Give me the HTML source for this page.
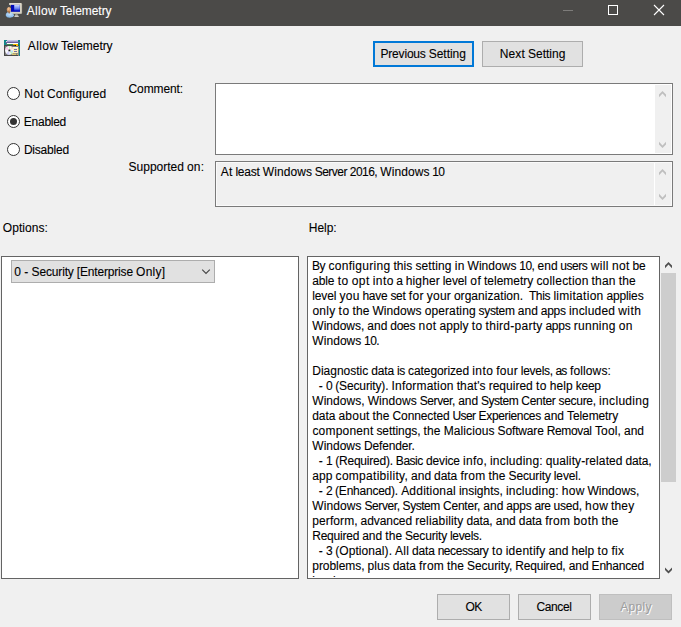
<!DOCTYPE html>
<html>
<head>
<meta charset="utf-8">
<title>Allow Telemetry</title>
<style>
html,body{margin:0;padding:0;}
body{width:681px;height:627px;overflow:hidden;background:#f0f0f0;position:relative;font-family:"Liberation Sans",sans-serif;font-size:12px;line-height:14px;color:#000;}
.abs{position:absolute;box-sizing:border-box;}
.t{-webkit-text-stroke:0.1px currentColor;position:absolute;white-space:pre;font-family:"Liberation Sans",sans-serif;font-size:12px;line-height:14px;}
.titlebar{left:0;top:0;width:681px;height:26px;background:#4b4a48;}
.btn{background:#e1e1e1;border:1px solid #adadad;}
.radio{width:13px;height:13px;border-radius:50%;border:1px solid #333;background:#fff;}
.radio.on::after{content:"";position:absolute;left:2px;top:2px;width:7px;height:7px;border-radius:50%;background:#333;}
.panel{background:#fff;border:1px solid #646464;}
</style>
</head>
<body>
<!-- title bar -->
<div class="abs titlebar"></div>
<svg class="abs" style="left:0;top:0" width="681" height="26" viewBox="0 0 681 26">
  <!-- window buttons -->
  <rect x="563" y="10" width="10" height="1" fill="#7d7c7a"/>
  <rect x="608.5" y="5.5" width="9" height="9" fill="none" stroke="#fff" stroke-width="1"/>
  <path d="M654 5 L664 15 M664 5 L654 15" stroke="#fff" stroke-width="1.1" fill="none"/>
  <!-- app icon: monitor + person -->
  <defs>
    <linearGradient id="scr" x1="0" y1="0" x2="1" y2="0"><stop offset="0" stop-color="#0000a8"/><stop offset="0.35" stop-color="#0a14c8"/><stop offset="0.5" stop-color="#7f92ee"/><stop offset="0.8" stop-color="#8ea0f0"/><stop offset="0.9" stop-color="#2a48e0"/><stop offset="1" stop-color="#1a34d8"/></linearGradient>
    <linearGradient id="scr2" x1="0" y1="0" x2="0" y2="1"><stop offset="0" stop-color="#1020d0" stop-opacity="0.55"/><stop offset="0.5" stop-color="#fff" stop-opacity="0"/><stop offset="1" stop-color="#0818c0" stop-opacity="0.8"/></linearGradient>
    <linearGradient id="hl" x1="0" y1="0" x2="0" y2="1"><stop offset="0" stop-color="#c8d6ff"/><stop offset="0.6" stop-color="#7088f0"/><stop offset="1" stop-color="#1428d0"/></linearGradient>
    <radialGradient id="body" cx="0.5" cy="0.35" r="0.7"><stop offset="0" stop-color="#c8e0f8"/><stop offset="1" stop-color="#7ab2e8"/></radialGradient>
  </defs>
  <g>
    <rect x="9" y="3" width="13.1" height="11" rx="1.2" fill="#b4b0a0"/>
    <rect x="9" y="3" width="12.4" height="10.3" rx="1" fill="#d6d2c4"/>
    <rect x="9.8" y="3.4" width="11" height="1" fill="#e6e3da"/>
    <rect x="10.8" y="4.9" width="9.2" height="6.9" fill="#0008b8"/>
    <rect x="14.2" y="5" width="5.6" height="5.6" fill="url(#hl)"/>
    <rect x="15.2" y="13.9" width="2.4" height="1.6" fill="#9c9a92"/>
    <path d="M14.2 16.9 L15 15.3 L18 15.3 L19 16.9 Z" fill="#cfcdc8"/>
    <ellipse cx="8.8" cy="9.3" rx="2.0" ry="3.0" fill="#d49a68"/>
    <ellipse cx="8.5" cy="8.6" rx="1.1" ry="1.5" fill="#eebc8c"/>
    <path d="M6.3 9 Q5.8 4.6 8.8 4.7 Q11.4 4.8 11.1 8.6 Q10.4 6.8 8.9 6.9 Q7.4 7 6.9 9 Z" fill="#4c4c4c"/>
    <path d="M5.7 15.2 Q6 12.4 8.8 12.1 Q13 12.2 14.2 15.6 Q13.6 17.4 10 17.7 Q6.4 17.7 5.7 15.2 Z" fill="url(#body)"/>
    <path d="M7.9 11.6 L9.1 14 L10.3 11.6 Z" fill="#9c5c2c"/>
  </g>
</svg>

<!-- policy icon -->
<svg class="abs" style="left:4px;top:40px" width="16" height="16" viewBox="0 0 16 16">
  <rect x="0" y="0" width="3" height="1" fill="#0e8888"/>
  <rect x="0" y="1" width="2" height="4" fill="#0e8888"/>
  <rect x="14" y="0" width="2" height="5" fill="#0e8888"/>
  <rect x="15" y="5" width="1" height="11" fill="#0e8888"/>
  <rect x="3" y="0" width="11" height="1" fill="#c4c4e6"/>
  <rect x="3" y="1" width="11" height="1" fill="#a6a2d2"/>
  <rect x="1.4" y="1.9" width="14" height="1.2" fill="#6a629e"/>
  <rect x="2" y="3" width="1" height="2" fill="#4a7a8a"/>
  <rect x="3" y="3" width="11" height="1" fill="#fff"/>
  <rect x="3" y="4" width="6" height="1" fill="#3f8a52"/>
  <rect x="9" y="4" width="5" height="1" fill="#f6bc00"/>
  <rect x="0" y="5" width="15" height="11" fill="#484848"/>
  <rect x="12" y="5" width="2" height="1" fill="#f6bc00"/>
  <rect x="10.8" y="5" width="1.2" height="1" fill="#0a0a0a"/>
  <rect x="1" y="6" width="13" height="9" fill="#7c7c7c"/>
  <rect x="14" y="6" width="1" height="10" fill="#8a8a8a"/>
  <rect x="14.2" y="9" width="0.9" height="1" fill="#e0b020"/>
  <circle cx="5.4" cy="10.4" r="4.3" fill="#f8f8fc"/>
  <path d="M5.4 10.4 L4.6 6.2 A4.3 4.3 0 0 1 6.4 6.2 Z" fill="#c8f4c0"/>
  <path d="M5.4 10.4 L7.6 6.7 A4.3 4.3 0 0 1 9.4 8.8 Z" fill="#fcdcc8"/>
  <path d="M5.4 10.4 L1.3 9.2 A4.3 4.3 0 0 1 3.2 6.7 Z" fill="#f8c8e8"/>
  <path d="M5.4 10.4 L9.7 10.6 A4.3 4.3 0 0 1 9 12.8 Z" fill="#b4dcf8"/>
  <path d="M5.4 10.4 L7.2 14.3 A4.3 4.3 0 0 0 8.8 13.1 Z" fill="#b8ecb0"/>
  <path d="M5.4 10.4 L2.4 13.5 A4.3 4.3 0 0 0 5.4 14.7 Z" fill="#d0d0fc"/>
  <circle cx="5.4" cy="10.4" r="1.2" fill="#8a8a8a"/>
  <circle cx="5.4" cy="10.4" r="0.7" fill="#202020"/>
  <rect x="9" y="7" width="5" height="6" fill="#fcefbc"/>
  <rect x="9" y="7" width="5" height="1" fill="#fffbe8"/>
  <rect x="10" y="9" width="3" height="1" fill="#7470a8"/>
  <rect x="10" y="11" width="3" height="1" fill="#7470a8"/>
  <rect x="8" y="13.6" width="4.2" height="1.2" fill="#f0d870"/>
  <rect x="13" y="13.6" width="0.9" height="1.2" fill="#f0d870"/>
</svg>

<!-- radios -->
<div class="abs radio" style="left:7px;top:87px"></div>
<div class="abs radio on" style="left:7px;top:115px"></div>
<div class="abs radio" style="left:7px;top:143px"></div>

<!-- nav buttons -->
<div class="abs btn" style="left:373px;top:41px;width:101px;height:26px;border:2px solid #0078d7;"></div>
<div class="abs btn" style="left:482px;top:41px;width:101px;height:26px;"></div>

<!-- comment box -->
<div class="abs" style="left:215px;top:83px;width:458px;height:72px;background:#fff;border:1px solid #7a7a7a;">
  <div class="abs" style="right:1px;top:1px;width:16px;height:68px;background:#f0f0f0;"></div>
  <svg class="abs" style="right:1px;top:0" width="16" height="70" viewBox="0 0 16 70">
    <path d="M4 10.6 L7.5 7 L11 10.6 L11 13.2 L7.5 9.6 L4 13.2 Z" fill="#bfbfbf"/>
    <path d="M4 60.4 L7.5 64 L11 60.4 L11 57.8 L7.5 61.4 L4 57.8 Z" fill="#bfbfbf"/>
  </svg>
</div>

<!-- supported on box -->
<div class="abs" style="left:215px;top:161px;width:458px;height:46px;background:#f0f0f0;border:1px solid #7a7a7a;">
  <div class="abs" style="left:0;top:0;right:0;bottom:0;border:1px solid #fafafa;"></div>
  <div class="abs" style="right:17px;top:1px;width:1px;bottom:1px;background:#fff;"></div>
  <svg class="abs" style="right:1px;top:0" width="16" height="44" viewBox="0 0 16 44">
    <path d="M4 10.6 L7.5 7 L11 10.6 L11 13.2 L7.5 9.6 L4 13.2 Z" fill="#bfbfbf"/>
    <path d="M4 34.4 L7.5 38 L11 34.4 L11 31.8 L7.5 35.4 L4 31.8 Z" fill="#bfbfbf"/>
  </svg>
</div>

<!-- options panel -->
<div class="abs panel" style="left:1px;top:256px;width:298px;height:323px;"></div>
<div class="abs" style="left:11px;top:260px;width:204px;height:23px;background:#e1e1e1;border:1px solid #adadad;"></div>
<svg class="abs" style="left:200px;top:266px" width="14" height="12" viewBox="0 0 14 12">
  <path d="M2.2 3.7 L6 7.5 L9.8 3.7" stroke="#444" stroke-width="1.1" fill="none"/>
</svg>

<!-- help panel -->
<div class="abs panel" style="left:307px;top:256px;width:353px;height:323px;overflow:hidden;">
<div class="abs" style="left:0;top:0;width:351px;height:320px;overflow:hidden;">
<span class="t" style="left:4.05px;top:2.34px;letter-spacing:-0.500px;">By</span><span class="t" style="left:20.47px;top:2.34px;letter-spacing:0.305px;">configuring</span><span class="t" style="left:85.44px;top:2.34px;letter-spacing:0.084px;">this</span><span class="t" style="left:107.47px;top:2.34px;letter-spacing:0.098px;">setting</span><span class="t" style="left:146.64px;top:2.34px;letter-spacing:0.334px;">in</span><span class="t" style="left:159.51px;top:2.34px;letter-spacing:0.053px;">Windows</span><span class="t" style="left:211.27px;top:2.34px;letter-spacing:-0.556px;">10,</span><span class="t" style="left:229.57px;top:2.34px;letter-spacing:-0.002px;">end</span><span class="t" style="left:252.37px;top:2.34px;letter-spacing:-0.462px;">users</span><span class="t" style="left:282.80px;top:2.34px;letter-spacing:0.337px;">will</span><span class="t" style="left:303.88px;top:2.34px;letter-spacing:0.445px;">not</span><span class="t" style="left:324.60px;top:2.34px;letter-spacing:-0.172px;">be</span>
<span class="t" style="left:4.23px;top:17.34px;letter-spacing:-0.148px;">able</span><span class="t" style="left:29.67px;top:17.34px;letter-spacing:0.516px;">to</span><span class="t" style="left:43.70px;top:17.34px;letter-spacing:0.464px;">opt</span><span class="t" style="left:64.78px;top:17.34px;letter-spacing:0.433px;">into</span><span class="t" style="left:88.33px;top:17.34px;letter-spacing:-0.661px;">a</span><span class="t" style="left:97.77px;top:17.34px;letter-spacing:0.131px;">higher</span><span class="t" style="left:134.81px;top:17.34px;letter-spacing:-0.117px;">level</span><span class="t" style="left:162.24px;top:17.34px;letter-spacing:0.516px;">of</span><span class="t" style="left:176.04px;top:17.34px;letter-spacing:-0.016px;">telemetry</span><span class="t" style="left:228.38px;top:17.34px;letter-spacing:0.219px;">collection</span><span class="t" style="left:283.60px;top:17.34px;letter-spacing:0.186px;">than</span><span class="t" style="left:310.69px;top:17.34px;letter-spacing:0.129px;">the</span>
<span class="t" style="left:4.24px;top:32.34px;letter-spacing:-0.119px;">level</span><span class="t" style="left:31.53px;top:32.34px;letter-spacing:0.240px;">you</span><span class="t" style="left:54.38px;top:32.34px;letter-spacing:-0.233px;">have</span><span class="t" style="left:82.45px;top:32.34px;letter-spacing:-0.319px;">set</span><span class="t" style="left:100.85px;top:32.34px;letter-spacing:0.348px;">for</span><span class="t" style="left:118.84px;top:32.34px;letter-spacing:0.188px;">your</span><span class="t" style="left:145.88px;top:32.34px;letter-spacing:0.043px;">organization.</span><span class="t" style="left:220.95px;top:32.34px;letter-spacing:-0.397px;">This</span><span class="t" style="left:245.39px;top:32.34px;letter-spacing:0.284px;">limitation</span><span class="t" style="left:298.39px;top:32.34px;letter-spacing:-0.126px;">applies</span>
<span class="t" style="left:4.43px;top:47.34px;letter-spacing:0.260px;">only</span><span class="t" style="left:30.62px;top:47.34px;letter-spacing:0.506px;">to</span><span class="t" style="left:44.46px;top:47.34px;letter-spacing:0.118px;">the</span><span class="t" style="left:64.48px;top:47.34px;letter-spacing:0.062px;">Windows</span><span class="t" style="left:116.63px;top:47.34px;letter-spacing:0.120px;">operating</span><span class="t" style="left:170.54px;top:47.34px;letter-spacing:-0.321px;">system</span><span class="t" style="left:209.80px;top:47.34px;letter-spacing:0.006px;">and</span><span class="t" style="left:232.73px;top:47.34px;letter-spacing:-0.243px;">apps</span><span class="t" style="left:261.01px;top:47.34px;letter-spacing:0.176px;">included</span><span class="t" style="left:310.26px;top:47.34px;letter-spacing:0.428px;">with</span>
<span class="t" style="left:4.30px;top:62.34px;letter-spacing:0.004px;">Windows,</span><span class="t" style="left:59.35px;top:62.34px;letter-spacing:-0.004px;">and</span><span class="t" style="left:82.25px;top:62.34px;letter-spacing:-0.252px;">does</span><span class="t" style="left:110.62px;top:62.34px;letter-spacing:0.443px;">not</span><span class="t" style="left:131.45px;top:62.34px;letter-spacing:0.068px;">apply</span><span class="t" style="left:163.70px;top:62.34px;letter-spacing:0.497px;">to</span><span class="t" style="left:177.60px;top:62.34px;letter-spacing:0.275px;">third-party</span><span class="t" style="left:237.39px;top:62.34px;letter-spacing:-0.252px;">apps</span><span class="t" style="left:265.69px;top:62.34px;letter-spacing:0.287px;">running</span><span class="t" style="left:310.75px;top:62.34px;letter-spacing:0.327px;">on</span>
<span class="t" style="left:4.33px;top:77.34px;letter-spacing:0.055px;">Windows</span><span class="t" style="left:56.10px;top:77.34px;letter-spacing:-0.555px;">10.</span>
<span class="t" style="left:4.29px;top:107.34px;letter-spacing:-0.011px;">Diagnostic</span><span class="t" style="left:63.17px;top:107.34px;letter-spacing:-0.098px;">data</span><span class="t" style="left:89.02px;top:107.34px;letter-spacing:-0.341px;">is</span><span class="t" style="left:100.12px;top:107.34px;letter-spacing:-0.103px;">categorized</span><span class="t" style="left:164.29px;top:107.34px;letter-spacing:0.403px;">into</span><span class="t" style="left:188.21px;top:107.34px;letter-spacing:0.321px;">four</span><span class="t" style="left:212.87px;top:107.34px;letter-spacing:-0.294px;">levels,</span><span class="t" style="left:247.55px;top:107.34px;letter-spacing:-0.851px;">as</span><span class="t" style="left:262.01px;top:107.34px;letter-spacing:0.116px;">follows:</span>
<span class="t" style="left:10.82px;top:122.34px;letter-spacing:1.010px;">-</span><span class="t" style="left:17.99px;top:122.34px;letter-spacing:-0.675px;">0</span><span class="t" style="left:27.28px;top:122.34px;letter-spacing:-0.143px;">(Security).</span><span class="t" style="left:83.56px;top:122.34px;letter-spacing:0.191px;">Information</span><span class="t" style="left:148.66px;top:122.34px;letter-spacing:0.125px;">that's</span><span class="t" style="left:180.67px;top:122.34px;letter-spacing:0.008px;">required</span><span class="t" style="left:228.02px;top:122.34px;letter-spacing:0.504px;">to</span><span class="t" style="left:241.84px;top:122.34px;letter-spacing:0.090px;">help</span><span class="t" style="left:267.73px;top:122.34px;letter-spacing:-0.245px;">keep</span>
<span class="t" style="left:4.32px;top:137.34px;letter-spacing:0.035px;">Windows,</span><span class="t" style="left:59.65px;top:137.34px;letter-spacing:0.084px;">Windows</span><span class="t" style="left:111.71px;top:137.34px;letter-spacing:-0.402px;">Server,</span><span class="t" style="left:150.14px;top:137.34px;letter-spacing:0.027px;">and</span><span class="t" style="left:173.02px;top:137.34px;letter-spacing:-0.468px;">System</span><span class="t" style="left:213.33px;top:137.34px;letter-spacing:-0.306px;">Center</span><span class="t" style="left:250.54px;top:137.34px;letter-spacing:-0.307px;">secure,</span><span class="t" style="left:291.08px;top:137.34px;letter-spacing:0.323px;">including</span>
<span class="t" style="left:4.26px;top:152.34px;letter-spacing:-0.073px;">data</span><span class="t" style="left:30.48px;top:152.34px;letter-spacing:0.212px;">about</span><span class="t" style="left:64.54px;top:152.34px;letter-spacing:0.121px;">the</span><span class="t" style="left:84.49px;top:152.34px;letter-spacing:-0.098px;">Connected</span><span class="t" style="left:144.43px;top:152.34px;letter-spacing:-0.569px;">User</span><span class="t" style="left:170.61px;top:152.34px;letter-spacing:-0.351px;">Experiences</span><span class="t" style="left:235.99px;top:152.34px;letter-spacing:0.009px;">and</span><span class="t" style="left:259.00px;top:152.34px;letter-spacing:-0.096px;">Telemetry</span>
<span class="t" style="left:4.40px;top:167.34px;letter-spacing:0.195px;">component</span><span class="t" style="left:68.40px;top:167.34px;letter-spacing:-0.068px;">settings,</span><span class="t" style="left:115.59px;top:167.34px;letter-spacing:0.116px;">the</span><span class="t" style="left:135.64px;top:167.34px;letter-spacing:0.121px;">Malicious</span><span class="t" style="left:189.61px;top:167.34px;letter-spacing:-0.158px;">Software</span><span class="t" style="left:238.63px;top:167.34px;letter-spacing:-0.323px;">Removal</span><span class="t" style="left:286.97px;top:167.34px;letter-spacing:0.139px;">Tool,</span><span class="t" style="left:315.96px;top:167.34px;letter-spacing:0.004px;">and</span>
<span class="t" style="left:4.31px;top:182.34px;letter-spacing:0.011px;">Windows</span><span class="t" style="left:55.98px;top:182.34px;letter-spacing:-0.144px;">Defender.</span>
<span class="t" style="left:10.78px;top:197.34px;letter-spacing:0.988px;">-</span><span class="t" style="left:17.92px;top:197.34px;letter-spacing:-0.702px;">1</span><span class="t" style="left:27.15px;top:197.34px;letter-spacing:-0.197px;">(Required).</span><span class="t" style="left:87.86px;top:197.34px;letter-spacing:-0.481px;">Basic</span><span class="t" style="left:117.97px;top:197.34px;letter-spacing:-0.128px;">device</span><span class="t" style="left:155.07px;top:197.34px;letter-spacing:0.251px;">info,</span><span class="t" style="left:181.99px;top:197.34px;letter-spacing:0.217px;">including:</span><span class="t" style="left:237.80px;top:197.34px;letter-spacing:0.096px;">quality-related</span><span class="t" style="left:317.48px;top:197.34px;letter-spacing:-0.153px;">data,</span>
<span class="t" style="left:4.32px;top:212.34px;letter-spacing:0.035px;">app</span><span class="t" style="left:27.60px;top:212.34px;letter-spacing:0.287px;">compatibility,</span><span class="t" style="left:102.98px;top:212.34px;letter-spacing:0.035px;">and</span><span class="t" style="left:126.09px;top:212.34px;letter-spacing:-0.051px;">data</span><span class="t" style="left:152.44px;top:212.34px;letter-spacing:0.292px;">from</span><span class="t" style="left:180.55px;top:212.34px;letter-spacing:0.142px;">the</span><span class="t" style="left:200.55px;top:212.34px;letter-spacing:-0.135px;">Security</span><span class="t" style="left:245.85px;top:212.34px;letter-spacing:-0.139px;">level.</span>
<span class="t" style="left:10.78px;top:227.34px;letter-spacing:0.986px;">-</span><span class="t" style="left:17.91px;top:227.34px;letter-spacing:-0.704px;">2</span><span class="t" style="left:27.12px;top:227.34px;letter-spacing:-0.232px;">(Enhanced).</span><span class="t" style="left:93.16px;top:227.34px;letter-spacing:0.213px;">Additional</span><span class="t" style="left:150.89px;top:227.34px;letter-spacing:-0.017px;">insights,</span><span class="t" style="left:197.88px;top:227.34px;letter-spacing:0.215px;">including:</span><span class="t" style="left:253.77px;top:227.34px;letter-spacing:0.307px;">how</span><span class="t" style="left:279.53px;top:227.34px;letter-spacing:-0.020px;">Windows,</span>
<span class="t" style="left:4.34px;top:242.34px;letter-spacing:0.086px;">Windows</span><span class="t" style="left:56.41px;top:242.34px;letter-spacing:-0.401px;">Server,</span><span class="t" style="left:94.60px;top:242.34px;letter-spacing:-0.466px;">System</span><span class="t" style="left:134.97px;top:242.34px;letter-spacing:-0.212px;">Center,</span><span class="t" style="left:175.32px;top:242.34px;letter-spacing:0.029px;">and</span><span class="t" style="left:198.34px;top:242.34px;letter-spacing:-0.221px;">apps</span><span class="t" style="left:226.40px;top:242.34px;letter-spacing:-0.416px;">are</span><span class="t" style="left:245.61px;top:242.34px;letter-spacing:-0.239px;">used,</span><span class="t" style="left:277.10px;top:242.34px;letter-spacing:0.374px;">how</span><span class="t" style="left:303.12px;top:242.34px;letter-spacing:0.112px;">they</span>
<span class="t" style="left:4.34px;top:257.34px;letter-spacing:0.082px;">perform,</span><span class="t" style="left:52.62px;top:257.34px;letter-spacing:-0.083px;">advanced</span><span class="t" style="left:107.15px;top:257.34px;letter-spacing:0.152px;">reliability</span><span class="t" style="left:158.41px;top:257.34px;letter-spacing:-0.101px;">data,</span><span class="t" style="left:187.70px;top:257.34px;letter-spacing:0.040px;">and</span><span class="t" style="left:210.83px;top:257.34px;letter-spacing:-0.046px;">data</span><span class="t" style="left:237.20px;top:257.34px;letter-spacing:0.297px;">from</span><span class="t" style="left:265.49px;top:257.34px;letter-spacing:0.457px;">both</span><span class="t" style="left:293.54px;top:257.34px;letter-spacing:0.147px;">the</span>
<span class="t" style="left:4.19px;top:272.34px;letter-spacing:-0.223px;">Required</span><span class="t" style="left:54.20px;top:272.34px;letter-spacing:-0.022px;">and</span><span class="t" style="left:77.22px;top:272.34px;letter-spacing:0.094px;">the</span><span class="t" style="left:97.05px;top:272.34px;letter-spacing:-0.179px;">Security</span><span class="t" style="left:141.91px;top:272.34px;letter-spacing:-0.296px;">levels.</span>
<span class="t" style="left:10.77px;top:287.34px;letter-spacing:0.982px;">-</span><span class="t" style="left:17.90px;top:287.34px;letter-spacing:-0.709px;">3</span><span class="t" style="left:27.25px;top:287.34px;letter-spacing:0.070px;">(Optional).</span><span class="t" style="left:87.11px;top:287.34px;letter-spacing:0.202px;">All</span><span class="t" style="left:103.89px;top:287.34px;letter-spacing:-0.110px;">data</span><span class="t" style="left:129.64px;top:287.34px;letter-spacing:-0.431px;">necessary</span><span class="t" style="left:183.90px;top:287.34px;letter-spacing:0.473px;">to</span><span class="t" style="left:197.73px;top:287.34px;letter-spacing:0.229px;">identify</span><span class="t" style="left:240.45px;top:287.34px;letter-spacing:-0.034px;">and</span><span class="t" style="left:263.42px;top:287.34px;letter-spacing:0.058px;">help</span><span class="t" style="left:289.53px;top:287.34px;letter-spacing:0.473px;">to</span><span class="t" style="left:303.40px;top:287.34px;letter-spacing:0.318px;">fix</span>
<span class="t" style="left:4.28px;top:302.34px;letter-spacing:-0.047px;">problems,</span><span class="t" style="left:59.60px;top:302.34px;letter-spacing:0.024px;">plus</span><span class="t" style="left:84.68px;top:302.34px;letter-spacing:-0.060px;">data</span><span class="t" style="left:110.99px;top:302.34px;letter-spacing:0.282px;">from</span><span class="t" style="left:139.06px;top:302.34px;letter-spacing:0.133px;">the</span><span class="t" style="left:159.06px;top:302.34px;letter-spacing:-0.063px;">Security,</span><span class="t" style="left:207.24px;top:302.34px;letter-spacing:-0.197px;">Required,</span><span class="t" style="left:260.63px;top:302.34px;letter-spacing:0.024px;">and</span><span class="t" style="left:283.62px;top:302.34px;letter-spacing:-0.222px;">Enhanced</span>
<span class="t" style="left:4.16px;top:317.34px;letter-spacing:-0.288px;">levels.</span>
</div>
</div>
<!-- help scrollbar -->
<div class="abs" style="left:661px;top:273px;width:15px;height:209px;background:#cdcdcd;"></div>
<svg class="abs" style="left:660px;top:257px" width="17" height="321" viewBox="0 0 17 321">
  <path d="M5 8.6 L8.5 5 L12 8.6 L12 11.2 L8.5 7.6 L5 11.2 Z" fill="#505050"/>
  <path d="M5 313 L8.5 316.6 L12 313 L12 310.4 L8.5 314 L5 310.4 Z" fill="#505050"/>
</svg>

<!-- bottom buttons -->
<div class="abs btn" style="left:437px;top:594px;width:73px;height:26px;"></div>
<div class="abs btn" style="left:518px;top:594px;width:73px;height:26px;"></div>
<div class="abs" style="left:599px;top:594px;width:73px;height:26px;background:#cccccc;border:1px solid #bfbfbf;"></div>

<span class="t" style="left:26.67px;top:3.84px;letter-spacing:0.341px;color:#fff;">Allow</span><span class="t" style="left:59.91px;top:3.84px;letter-spacing:-0.039px;color:#fff;">Telemetry</span>
<span class="t" style="left:27.86px;top:38.84px;letter-spacing:0.327px;">Allow</span><span class="t" style="left:61.03px;top:38.84px;letter-spacing:-0.052px;">Telemetry</span>
<span class="t" style="left:24.22px;top:86.84px;letter-spacing:0.446px;">Not</span><span class="t" style="left:47.05px;top:86.84px;letter-spacing:0.035px;">Configured</span>
<span class="t" style="left:23.86px;top:114.84px;letter-spacing:-0.278px;">Enabled</span>
<span class="t" style="left:23.90px;top:142.84px;letter-spacing:-0.200px;">Disabled</span>
<span class="t" style="left:380.50px;top:46.84px;letter-spacing:-0.191px;">Previous</span><span class="t" style="left:428.75px;top:46.84px;letter-spacing:-0.033px;">Setting</span>
<span class="t" style="left:499.68px;top:46.84px;letter-spacing:0.155px;">Next</span><span class="t" style="left:527.95px;top:46.84px;letter-spacing:0.014px;">Setting</span>
<span class="t" style="left:128.54px;top:81.84px;letter-spacing:-0.120px;">Comment:</span>
<span class="t" style="left:128.60px;top:160.34px;letter-spacing:-0.003px;">Supported</span><span class="t" style="left:187.06px;top:160.34px;letter-spacing:0.142px;">on:</span>
<span class="t" style="left:220.68px;top:164.84px;letter-spacing:0.358px;">At</span><span class="t" style="left:235.45px;top:164.84px;letter-spacing:-0.248px;">least</span><span class="t" style="left:262.75px;top:164.84px;letter-spacing:0.079px;">Windows</span><span class="t" style="left:314.70px;top:164.84px;letter-spacing:-0.531px;">Server</span><span class="t" style="left:349.85px;top:164.84px;letter-spacing:-0.580px;">2016,</span><span class="t" style="left:380.32px;top:164.84px;letter-spacing:0.079px;">Windows</span><span class="t" style="left:432.22px;top:164.84px;letter-spacing:-0.650px;">10</span>
<span class="t" style="left:2.82px;top:220.84px;letter-spacing:0.037px;">Options:</span>
<span class="t" style="left:308.78px;top:220.84px;letter-spacing:-0.043px;">Help:</span>
<span class="t" style="left:14.27px;top:264.84px;letter-spacing:-0.667px;">0</span><span class="t" style="left:24.14px;top:264.84px;letter-spacing:1.017px;">-</span><span class="t" style="left:31.58px;top:264.84px;letter-spacing:-0.152px;">Security</span><span class="t" style="left:76.72px;top:264.84px;letter-spacing:-0.168px;">[Enterprise</span><span class="t" style="left:136.11px;top:264.84px;letter-spacing:0.216px;">Only]</span>
<span class="t" style="left:465.41px;top:600.34px;letter-spacing:-0.372px;">OK</span>
<span class="t" style="left:536.42px;top:600.34px;letter-spacing:-0.360px;">Cancel</span>
<span class="t" style="left:620.25px;top:600.34px;letter-spacing:0.294px;color:#a0a0a0;text-shadow:1px 1px 0 #fff;">Apply</span>
</body>
</html>
